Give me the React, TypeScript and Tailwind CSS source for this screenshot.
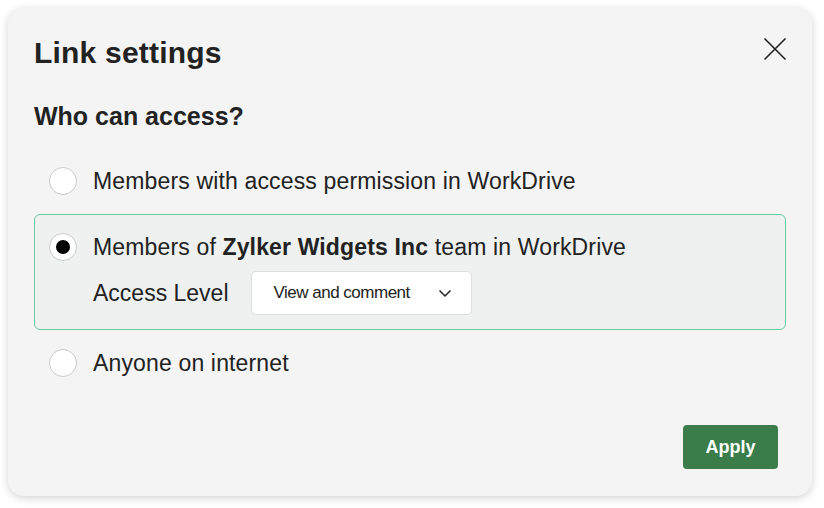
import { useState } from 'react'

type Option = {
  id: string
  label: React.ReactNode
}

const options: Option[] = [
  { id: 'permission', label: 'Members with access permission in WorkDrive' },
  {
    id: 'team',
    label: (
      <>
        Members of <span className="font-bold">Zylker Widgets Inc</span> team in WorkDrive
      </>
    ),
  },
  { id: 'internet', label: 'Anyone on internet' },
]

function Radio({ checked }: { checked: boolean }) {
  return (
    <span className="flex h-[28px] w-[28px] shrink-0 items-center justify-center rounded-full border border-[#cbcbcb] bg-white">
      {checked && <span className="h-[14px] w-[14px] rounded-full bg-black" />}
    </span>
  )
}

export default function App() {
  const [selected, setSelected] = useState('team')

  return (
    <div className="min-h-screen bg-white p-2 font-['Liberation_Sans',Arial,sans-serif] text-[#222]">
      <div className="flex h-[488px] w-[804px] flex-col rounded-[16px] bg-[#f4f4f4] px-[26px] pt-[28px] pb-[27px] shadow-[0_2px_8px_rgba(0,0,0,0.18)]">
        {/* header */}
        <div className="flex items-start justify-between">
          <h1 className="text-[30px] font-bold leading-[34px] tracking-[0.2px]">Link settings</h1>
          <button className="mr-[-2px] text-[#222]" aria-label="Close">
            <svg width="26" height="26" viewBox="0 0 26 26" fill="none" stroke="currentColor" strokeWidth="1.6">
              <path d="M2.5 2.5 L23.5 23.5 M23.5 2.5 L2.5 23.5" />
            </svg>
          </button>
        </div>

        <h2 className="mt-[31px] text-[25px] font-bold leading-[30px]">Who can access?</h2>

        <div className="mt-[35px] flex flex-col">
          {options.map((opt, i) => {
            const isActive = selected === opt.id
            return (
              <div
                key={opt.id}
                className={`rounded-[6px] border px-[14px] ${
                  isActive
                    ? 'border-[#6ccba3] bg-[#eef1f0] pt-[18px] pb-[14px]'
                    : 'border-transparent py-0'
                } ${i > 0 ? 'mt-[18px]' : ''}`}
              >
                <label className="flex cursor-pointer items-center gap-[16px]" onClick={() => setSelected(opt.id)}>
                  <Radio checked={isActive} />
                  <span className="text-[23px] leading-[28px] tracking-[0.15px]">{opt.label}</span>
                </label>
                {isActive && opt.id === 'team' && (
                  <div className="mt-[10px] flex items-center gap-[22px] pl-[44px]">
                    <span className="text-[23px] leading-[28px]">Access Level</span>
                    <button className="flex h-[44px] w-[221px] items-center justify-between rounded-[5px] border border-[#dedede] bg-white pr-[19px] pl-[22px] text-[17px] tracking-[-0.5px]">
                      <span>View and comment</span>
                      <svg width="14" height="9" viewBox="0 0 14 9" fill="none" stroke="currentColor" strokeWidth="1.5">
                        <path d="M1.5 1.5 L7 7 L12.5 1.5" />
                      </svg>
                    </button>
                  </div>
                )}
              </div>
            )
          })}
        </div>

        <div className="mt-auto flex justify-end pr-[8px]">
          <button className="h-[44px] w-[95px] rounded-[4px] bg-[#3a7d4a] text-[18px] font-bold text-white">
            Apply
          </button>
        </div>
      </div>
    </div>
  )
}
